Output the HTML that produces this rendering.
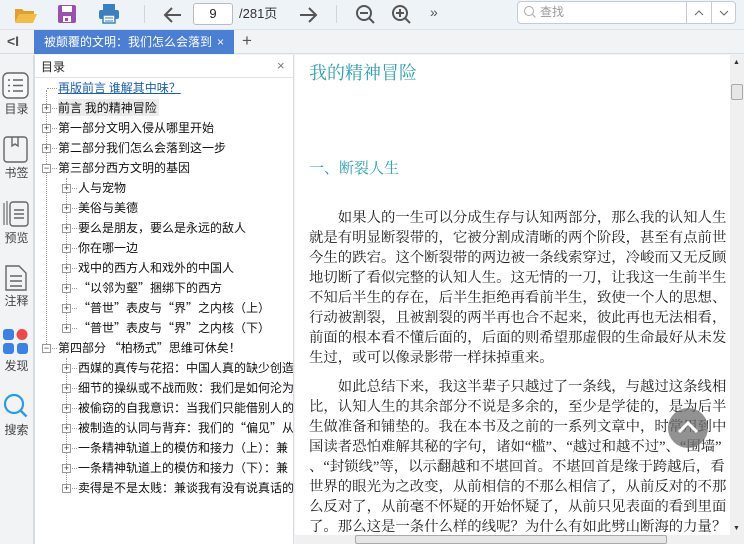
<!DOCTYPE html>
<html><head><meta charset="utf-8">
<style>
*{margin:0;padding:0;box-sizing:border-box}
body{width:744px;height:544px;overflow:hidden;background:#f2f3f5;font-family:"Liberation Sans","Noto Sans CJK SC",sans-serif;position:relative;color:#222}
.a{position:absolute}
.tb{left:0;top:0;width:744px;height:30px;background:#eef3f8;border-bottom:1px solid #dde3ea}
.tabbar{left:0;top:30px;width:744px;height:24px;background:#f2f3f5;border-bottom:1px solid #d8dce2}
.toc{left:34px;top:55px;width:260px;height:489px;background:#fff;border-left:1px solid #d8dce2;border-right:1px solid #d8dce2}
.row{position:absolute;font-family:"Noto Sans CJK SC",sans-serif;font-size:12px;line-height:20px;white-space:nowrap;color:#111}
.pb{position:absolute;width:9px;height:9px;border:1px solid #999;background:#fff;font-size:9px;line-height:7px;text-align:center;color:#333}
.content{left:295px;top:55px;width:435px;height:480px;background:#fff}
.ln{position:absolute;left:14px;font-family:"Liberation Serif","Noto Serif CJK SC",serif;font-size:14.4px;line-height:20px;white-space:nowrap;color:#222;letter-spacing:0px}
.side{font-size:12px;color:#444;text-align:center;width:33px;left:0}
</style></head><body>
<div class="a tb"></div>
<svg class="a" style="left:14px;top:4px" width="24" height="20"><path d="M1 5h7l2 2h10v3H6L1 18z" fill="#e0a030"/><path d="M5 10h18l-4 9H1z" fill="#f3bc45"/></svg>
<svg class="a" style="left:57px;top:4px" width="20" height="20"><rect x="1" y="1" width="18" height="18" rx="2" fill="#9b4fae"/><rect x="5" y="2" width="10" height="6" fill="#fff"/><rect x="6" y="12" width="8" height="6" fill="#fff"/><rect x="8" y="14" width="3" height="3" fill="#9b4fae"/></svg>
<svg class="a" style="left:98px;top:3px" width="22" height="22"><rect x="5" y="1" width="12" height="6" fill="#3a7fc0"/><rect x="1" y="7" width="20" height="9" rx="2" fill="#3a7fc0"/><rect x="5" y="12" width="12" height="8" fill="#fff" stroke="#3a7fc0" stroke-width="1.5"/><line x1="7" y1="15" x2="15" y2="15" stroke="#3a7fc0"/><line x1="7" y1="18" x2="15" y2="18" stroke="#3a7fc0"/></svg>
<div class="a" style="left:144px;top:5px;width:1px;height:18px;background:#cfd5dc"></div>
<svg class="a" style="left:163px;top:5px" width="20" height="20"><path d="M18 10H3M9 3l-7 7 7 7" stroke="#555" stroke-width="2" fill="none"/></svg>
<div class="a" style="left:193px;top:3px;width:40px;height:22px;background:#fff;border:1px solid #bbb;border-radius:3px;font-size:13px;line-height:20px;text-align:center">9</div>
<div class="a" style="left:239px;top:5px;font-size:13px;line-height:18px;color:#333">/281页</div>
<svg class="a" style="left:298px;top:5px" width="20" height="20"><path d="M2 10h15M11 3l7 7-7 7" stroke="#555" stroke-width="2" fill="none"/></svg>
<div class="a" style="left:336px;top:5px;width:1px;height:18px;background:#cfd5dc"></div>
<svg class="a" style="left:355px;top:4px" width="22" height="22"><circle cx="9" cy="9" r="7" stroke="#555" stroke-width="2" fill="none"/><path d="M5 9h8M14 14l5 5" stroke="#555" stroke-width="2"/></svg>
<svg class="a" style="left:391px;top:4px" width="22" height="22"><circle cx="9" cy="9" r="7" stroke="#555" stroke-width="2" fill="none"/><path d="M5 9h8M9 5v8M14 14l5 5" stroke="#555" stroke-width="2"/></svg>
<div class="a" style="left:430px;top:4px;font-size:14px;color:#555">»</div>
<div class="a" style="left:517px;top:1px;width:219px;height:23px;background:#fff;border:1px solid #c5cbd2;border-radius:4px"></div>
<svg class="a" style="left:523px;top:5px" width="14" height="14"><circle cx="6" cy="6" r="4.5" stroke="#aaa" fill="none"/><path d="M9.5 9.5l3 3" stroke="#aaa"/></svg>
<div class="a" style="left:540px;top:4px;font-size:12px;color:#999;line-height:16px">查找</div>
<div class="a" style="left:686px;top:1px;width:1px;height:23px;background:#c5cbd2"></div>
<div class="a" style="left:711px;top:1px;width:1px;height:23px;background:#c5cbd2"></div>
<svg class="a" style="left:693px;top:9px" width="12" height="8"><path d="M2 6l4-4 4 4" stroke="#666" fill="none"/></svg>
<svg class="a" style="left:718px;top:9px" width="12" height="8"><path d="M2 2l4 4 4-4" stroke="#666" fill="none"/></svg>
<div class="a tabbar"></div>
<div class="a" style="left:7px;top:33px;font-size:14px;color:#555;font-weight:bold">&lt;I</div>
<div class="a" style="left:34px;top:30px;width:200px;height:24px;background:#4a7fd4;color:#fff;font-family:'Noto Sans CJK SC',sans-serif;font-size:12px;line-height:24px;padding-left:10px;white-space:nowrap;overflow:hidden">被颠覆的文明：我们怎么会落到<span class="a" style="left:183px;top:0;font-family:'Liberation Sans',sans-serif">×</span></div>
<div class="a" style="left:242px;top:31px;font-size:17px;color:#555">+</div>
<div class="a" style="left:33px;top:55px;width:1px;height:489px;background:#d8dce2"></div>
<svg class="a" style="left:2px;top:72px" width="28" height="28"><rect x="1" y="1" width="25" height="25" rx="5" stroke="#666" stroke-width="1.4" fill="#f7f8f9"/><g stroke="#666" stroke-width="1.6"><path d="M6 8h2M11 8h10M6 13.5h2M11 13.5h10M6 19h2M11 19h10"/></g></svg>
<div class="a side" style="top:100px">目录</div>
<svg class="a" style="left:3px;top:136px" width="26" height="28"><rect x="1" y="1" width="23" height="25" rx="3" stroke="#666" stroke-width="1.4" fill="none"/><path d="M9 1v9l3-2 3 2V1" stroke="#666" stroke-width="1.4" fill="none"/></svg>
<div class="a side" style="top:164px">书签</div>
<svg class="a" style="left:2px;top:199px" width="28" height="30"><path d="M2 4v22M5 2v24" stroke="#777" stroke-width="1.3"/><rect x="8" y="3" width="18" height="24" rx="3" stroke="#666" stroke-width="1.4" fill="none"/><path d="M12 11h10M12 15h10M12 19h10" stroke="#666" stroke-width="1.4"/></svg>
<div class="a side" style="top:229px">预览</div>
<svg class="a" style="left:4px;top:263px" width="24" height="30"><path d="M2 3h13l7 7v17H2z" stroke="#666" stroke-width="1.4" fill="none"/><path d="M6 13h12M6 18h12M6 23h12" stroke="#666" stroke-width="1.4"/></svg>
<div class="a side" style="top:292px">注释</div>
<svg class="a" style="left:3px;top:329px" width="26" height="26"><rect x="0" y="0" width="11" height="11" rx="3" fill="#3b82e6"/><circle cx="19" cy="5.5" r="5.5" fill="#f04848"/><rect x="0" y="14" width="11" height="11" rx="3" fill="#3b82e6"/><rect x="14" y="14" width="11" height="11" rx="3" fill="#3b82e6"/></svg>
<div class="a side" style="top:357px">发现</div>
<svg class="a" style="left:3px;top:393px" width="26" height="26"><circle cx="11" cy="11" r="9" stroke="#2b9be6" stroke-width="2.2" fill="none"/><path d="M17.5 17.5l6 6" stroke="#2b9be6" stroke-width="2.4"/></svg>
<div class="a side" style="top:421px">搜索</div>
<div class="a toc"></div>
<div class="a" style="left:35px;top:55px;width:258px;height:23px;border-bottom:1px solid #e3e3e3"></div>
<div class="a" style="left:41px;top:59px;font-size:12px;line-height:16px">目录</div>
<div class="a" style="left:277px;top:58px;font-size:13px;color:#777">×</div>
<div class="a" style="left:46px;top:90px;width:0;height:262px;border-left:1px dotted #999"></div>
<div class="a" style="left:66px;top:178px;width:0;height:152px;border-left:1px dotted #999"></div>
<div class="a" style="left:66px;top:358px;width:0;height:132px;border-left:1px dotted #999"></div>
<div id="toc"></div>
<div class="a content"></div>
<div class="a" style="left:309px;top:61px;font-family:'Liberation Serif','Noto Serif CJK SC',serif;font-size:18px;color:#2aa0b0;line-height:24px">我的精神冒险</div>
<div class="a" style="left:309px;top:158px;font-family:'Liberation Serif','Noto Serif CJK SC',serif;font-size:15px;color:#2aa0b0;line-height:22px">一、断裂人生</div>
<div id="txt" class="a" style="left:295px;top:1px"></div>
<div class="a" style="left:730px;top:55px;width:14px;height:480px;background:#f0f0f0"></div>
<div class="a" style="left:733px;top:59px;font-size:7px;color:#333">▲</div>
<div class="a" style="left:731px;top:84px;width:12px;height:16px;background:#e6e6e6;border:1px solid #aaa;border-radius:2px"></div>
<div class="a" style="left:733px;top:525px;font-size:7px;color:#333">▼</div>
<div class="a" style="left:295px;top:535px;width:449px;height:9px;background:#f0f0f0"></div>
<div class="a" style="left:355px;top:535px;width:312px;height:9px;background:#e6e6e6;border:1px solid #aaa;border-radius:2px"></div>
<div class="a" style="left:668px;top:408px;width:40px;height:40px;border-radius:50%;background:rgba(110,110,110,.75)"></div>
<svg class="a" style="left:676px;top:418px" width="24" height="18"><path d="M3 14l9-9 9 9" stroke="#fff" stroke-width="3" fill="none"/></svg>
<script>
var rows=[
[0,"再版前言 谁解其中味？",1],[1,"前言 我的精神冒险",2],[1,"第一部分文明入侵从哪里开始"],[1,"第二部分我们怎么会落到这一步"],[1,"第三部分西方文明的基因",0,1],
[2,"人与宠物"],[2,"美俗与美德"],[2,"要么是朋友，要么是永远的敌人"],[2,"你在哪一边"],[2,"戏中的西方人和戏外的中国人"],[2,"“以邻为壑”捆绑下的西方"],[2,"“普世”表皮与“界”之内核（上）"],[2,"“普世”表皮与“界”之内核（下）"],
[1,"第四部分 “柏杨式”思维可休矣！",0,1],[2,"西媒的真传与花招：中国人真的缺少创造"],[2,"细节的操纵或不战而败：我们是如何沦为"],[2,"被偷窃的自我意识：当我们只能借别人的"],[2,"被制造的认同与背弃：我们的“偏见”从"],[2,"一条精神轨道上的模仿和接力（上）：兼"],[2,"一条精神轨道上的模仿和接力（下）：兼"],[2,"卖得是不是太贱：兼谈我有没有说真话的"]];
var h="";
rows.forEach(function(r,i){var y=78+i*20;var lv=r[0];
var bx=lv==2?62:42,tx=lv==2?78:58;
if(lv>0){h+='<div class="pb" style="left:'+bx+'px;top:'+(y+6)+'px">'+(r[3]?'−':'+')+'</div>';}
h+='<div class="a" style="left:'+(lv==0?47:bx+10)+'px;top:'+(y+10)+'px;width:'+(lv==0?10:5)+'px;border-top:1px dotted #999"></div>';
var st=r[2]==1?'color:#1a5fb4;text-decoration:underline':'';
var bg=r[2]==2?'background:#ececec;padding:0 2px;margin-left:-2px':'';
h+='<div class="row" style="left:'+tx+'px;top:'+y+'px;width:'+(293-tx)+'px;overflow:hidden;'+st+'"><span style="'+bg+'">'+r[1]+'</span></div>';});
document.getElementById('toc').innerHTML=h;
var L=[
[207,"　　如果人的一生可以分成生存与认知两部分，那么我的认知人生"],
[227,"就是有明显断裂带的，它被分割成清晰的两个阶段，甚至有点前世"],
[247,"今生的跌宕。这个断裂带的两边被一条线索穿过，冷峻而又无反顾"],
[267,"地切断了看似完整的认知人生。这无情的一刀，让我这一生前半生"],
[287,"不知后半生的存在，后半生拒绝再看前半生，致使一个人的思想、"],
[307,"行动被割裂，且被割裂的两半再也合不起来，彼此再也无法相看，"],
[327,"前面的根本看不懂后面的，后面的则希望那虚假的生命最好从未发"],
[347,"生过，或可以像录影带一样抹掉重来。"],
[376,"　　如此总结下来，我这半辈子只越过了一条线，与越过这条线相"],
[396,"比，认知人生的其余部分不说是多余的，至少是学徒的，是为后半"],
[416,"生做准备和铺垫的。我在本书及之前的一系列文章中，时常用到中"],
[436,"国读者恐怕难解其秘的字句，诸如“槛”、“越过和越不过”、“围墙”"],
[456,"、“封锁线”等，以示翻越和不堪回首。不堪回首是缘于跨越后，看"],
[476,"世界的眼光为之改变，从前相信的不那么相信了，从前反对的不那"],
[496,"么反对了，从前毫不怀疑的开始怀疑了，从前只见表面的看到里面"],
[516,"了。那么这是一条什么样的线呢？为什么有如此劈山断海的力量？"]];
var t="";L.forEach(function(l){t+='<div class="ln" style="top:'+l[0]+'px">'+l[1]+'</div>';});
document.getElementById('txt').innerHTML=t;
</script>
</body></html>
